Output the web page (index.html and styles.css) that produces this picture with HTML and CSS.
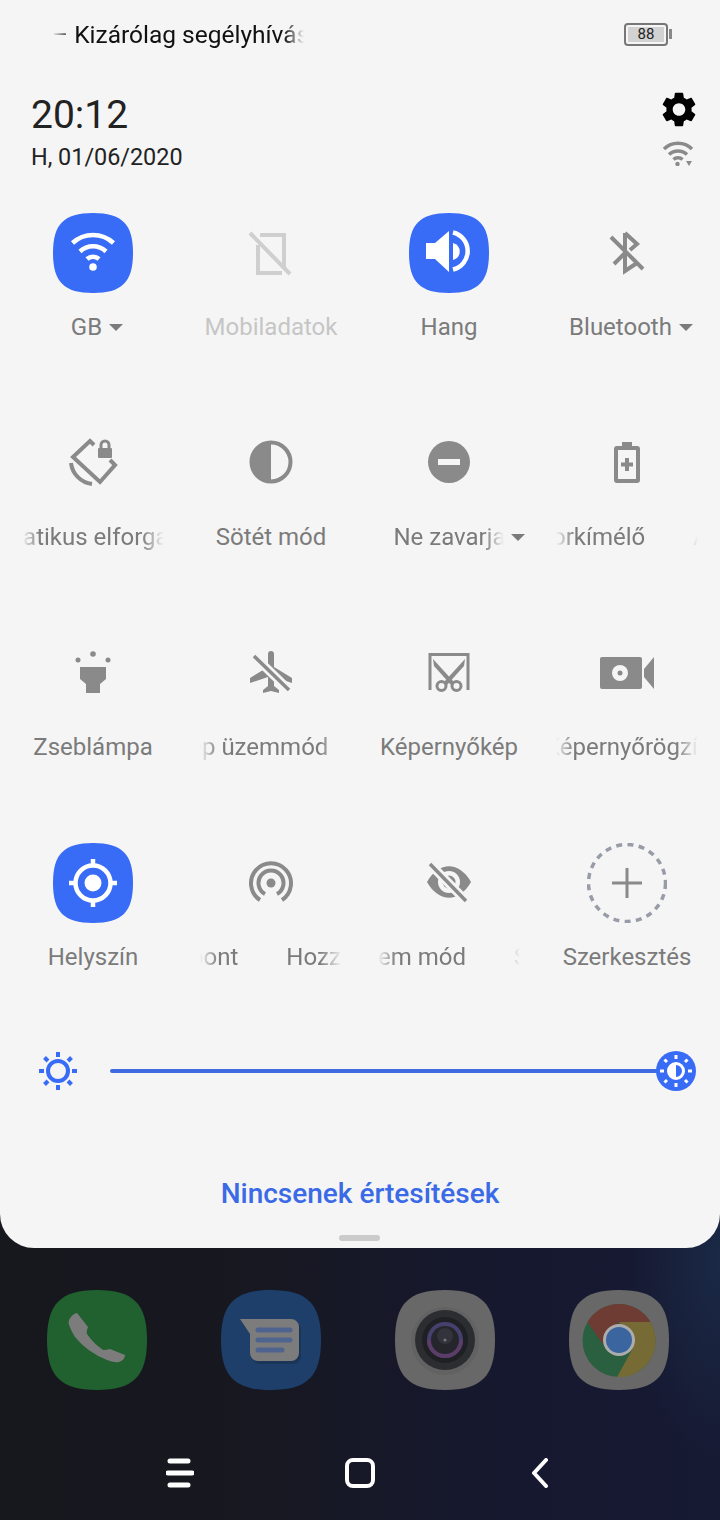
FILE: index.html
```html
<!DOCTYPE html>
<html lang="hu">
<head>
    <meta charset="UTF-8">
    <meta name="viewport" content="width=device-width, initial-scale=1.0">
    <title>Gyorsbeállítások</title>
    <link rel="stylesheet" href="styles.css">
</head>
<body>
    <svg class="defs" width="0" height="0">
        <symbol id="squircle" viewBox="0 0 80 80">
            <path d="M40 0C69 0 80 11 80 40C80 69 69 80 40 80C11 80 0 69 0 40C0 11 11 0 40 0Z"/>
        </symbol>
    </svg>

    <div class="panel">
        <div class="status">
            <div class="carrier"><span>– Kizárólag segélyhívás</span></div>
            <div class="battery">
                <div class="battery-body"><div class="battery-level">88</div></div>
                <div class="battery-nub"></div>
            </div>
        </div>

        <div class="clock-row">
            <div>
                <div class="time">20:12</div>
                <div class="date">H, 01/06/2020</div>
            </div>
            <div class="clock-icons">
                <svg class="gear" viewBox="2.4 2 19.2 20"><path d="M19.14 12.94c.04-.3.06-.61.06-.94 0-.32-.02-.64-.07-.94l2.03-1.58c.18-.14.23-.41.12-.61l-1.92-3.32c-.12-.22-.37-.29-.59-.22l-2.39.96c-.5-.38-1.03-.7-1.62-.94l-.36-2.54c-.04-.24-.24-.41-.48-.41h-3.84c-.24 0-.43.17-.47.41l-.36 2.54c-.59.24-1.13.57-1.62.94l-2.39-.96c-.22-.08-.47 0-.59.22L2.74 8.87c-.12.21-.08.47.12.61l2.03 1.58c-.05.3-.09.63-.09.94s.02.64.07.94l-2.03 1.58c-.18.14-.23.41-.12.61l1.92 3.32c.12.22.37.29.59.22l2.39-.96c.5.38 1.03.7 1.62.94l.36 2.54c.05.24.24.41.48.41h3.84c.24 0 .44-.17.47-.41l.36-2.54c.59-.24 1.13-.56 1.62-.94l2.39.96c.22.08.47 0 .59-.22l1.92-3.32c.12-.22.07-.47-.12-.61l-2.01-1.58zM12 15.6c-1.98 0-3.6-1.62-3.6-3.6s1.62-3.6 3.6-3.6 3.6 1.62 3.6 3.6-1.62 3.6-3.6 3.6z"/></svg>
                <svg class="wifi-small" viewBox="0 0 32 26">
                    <path class="line-soft" d="M2 9A20 20 0 0 1 30 9M7 14.5A13 13 0 0 1 25 14.5M11.5 19.5A6.5 6.5 0 0 1 20.5 19.5"/>
                    <circle class="fill" cx="15.5" cy="24" r="2.2"/>
                    <path class="fill" d="M24 21H30L27 26Z"/>
                </svg>
            </div>
        </div>

        <div class="tiles">
            <div class="tile">
                <svg class="tile-icon" viewBox="0 0 80 80">
                    <use class="tile-on" href="#squircle" width="80" height="80"/>
                    <path class="white-line" d="M19.5 30A30 30 0 0 1 60.5 30M27 38.5A19 19 0 0 1 53 38.5M34 46A9 9 0 0 1 46 46"/>
                    <circle class="white" cx="40" cy="54" r="3.8"/>
                </svg>
                <div class="label label-caret"><span>GB</span><i class="caret"></i></div>
            </div>
            <div class="tile">
                <svg class="tile-icon" viewBox="0 0 80 80">
                    <path class="off-line" d="M29 22H53V54M51 60H27V32M19 20L59 61"/>
                </svg>
                <div class="label label-off"><span>Mobiladatok</span></div>
            </div>
            <div class="tile">
                <svg class="tile-icon" viewBox="0 0 80 80">
                    <use class="tile-on" href="#squircle" width="80" height="80"/>
                    <path class="white" d="M17 30H26L40 18V59L26 46H17Z"/>
                    <path class="white" d="M44 30A10 9 0 0 1 44 47Z"/>
                    <path class="white-line" d="M44 19.5A19 19 0 0 1 44 56.5"/>
                </svg>
                <div class="label"><span>Hang</span></div>
            </div>
            <div class="tile">
                <svg class="tile-icon" viewBox="0 0 80 80">
                    <path class="line" d="M38 20L50 31L43 37M38 20V58L50 50M38 40L27 51"/>
                    <path class="line" d="M24 24L56 56"/>
                </svg>
                <div class="label label-caret"><span>Bluetooth</span><i class="caret"></i></div>
            </div>

            <div class="tile">
                <svg class="tile-icon" viewBox="0 0 80 80">
                    <path class="line" d="M41 22L37 18L20 34L47 59L62 42L57 37M18 40A24 24 0 0 0 39 61"/>
                    <rect class="fill" x="45" y="25" width="14" height="10" rx="1"/>
                    <path class="thin" d="M48 26V22A4 4 0 0 1 56 22V26"/>
                </svg>
                <div class="marquee"><div class="marquee-text shift-rotate"><span>Automatikus elforgatás</span><span>Automatikus elforgatás</span></div></div>
            </div>
            <div class="tile">
                <svg class="tile-icon" viewBox="0 0 80 80">
                    <circle class="line" cx="40" cy="39" r="19.5"/>
                    <path class="fill" d="M40 19A20 20 0 0 0 40 59Z"/>
                </svg>
                <div class="label"><span>Sötét mód</span></div>
            </div>
            <div class="tile">
                <svg class="tile-icon" viewBox="0 0 80 80">
                    <circle class="fill" cx="40" cy="39" r="21"/>
                    <rect class="bg" x="29" y="36" width="22" height="6"/>
                </svg>
                <div class="label label-dnd">
                    <div class="marquee marquee-short"><div class="marquee-text"><span>Ne zavarjanak</span></div></div>
                    <i class="caret"></i>
                </div>
            </div>
            <div class="tile">
                <svg class="tile-icon" viewBox="0 0 80 80">
                    <path class="fill" d="M35 19H45V25H35Z"/>
                    <rect class="line" x="29" y="25" width="22" height="33" rx="1"/>
                    <path class="line" d="M40 35V48M34 41.5H46"/>
                </svg>
                <div class="marquee"><div class="marquee-text shift-battery"><span>Akkumulátorkímélő</span><span>Akkumulátorkímélő</span></div></div>
            </div>

            <div class="tile">
                <svg class="tile-icon" viewBox="0 0 80 80">
                    <path class="fill" d="M27 34H53V46L47 51V60H33V51L27 46Z"/>
                    <circle class="fill" cx="40" cy="21" r="2.8"/>
                    <circle class="fill" cx="25" cy="27" r="2.5"/>
                    <circle class="fill" cx="55" cy="27" r="2.5"/>
                </svg>
                <div class="label"><span>Zseblámpa</span></div>
            </div>
            <div class="tile">
                <svg class="tile-icon" viewBox="0 0 80 80">
                    <path class="fill" d="M37 21A3 3 0 0 1 43 21V34L61 45V50L43 44V53L48 57V60L40 58L32 60V57L37 53V44L19 50V45L37 34Z"/>
                    <path class="gap" d="M23 23L58 57"/>
                    <path class="slash" d="M23 23L58 57"/>
                </svg>
                <div class="marquee"><div class="marquee-text shift-plane"><span>Repülőgép üzemmód</span><span>Repülőgép üzemmód</span></div></div>
            </div>
            <div class="tile">
                <svg class="tile-icon" viewBox="0 0 80 80">
                    <path class="thin" d="M21 57V21.5H59V57"/>
                    <path class="fill" d="M24 26L45 49L42 52L25 33Z"/>
                    <path class="fill" d="M56 26L35 49L38 52L55 33Z"/>
                    <circle class="thin" cx="32.5" cy="53" r="4.5"/>
                    <circle class="thin" cx="47.5" cy="53" r="4.5"/>
                </svg>
                <div class="label"><span>Képernyőkép</span></div>
            </div>
            <div class="tile">
                <svg class="tile-icon" viewBox="0 0 80 80">
                    <rect class="fill" x="13" y="24" width="42" height="32" rx="2"/>
                    <path class="fill" d="M67 24L57 36V44L67 56Z"/>
                    <circle class="bg" cx="33" cy="40" r="8"/>
                    <circle class="fill" cx="33" cy="40" r="2.5"/>
                </svg>
                <div class="marquee"><div class="marquee-text shift-record"><span>Képernyőrögzítő</span><span>Képernyőrögzítő</span></div></div>
            </div>

            <div class="tile">
                <svg class="tile-icon" viewBox="0 0 80 80">
                    <use class="tile-on" href="#squircle" width="80" height="80"/>
                    <circle class="white-line" cx="40" cy="40" r="17.5"/>
                    <circle class="white" cx="40" cy="40" r="8.5"/>
                    <path class="white-line" d="M40 16V23M40 57V64M16 40H23M57 40H64"/>
                </svg>
                <div class="label"><span>Helyszín</span></div>
            </div>
            <div class="tile">
                <svg class="tile-icon" viewBox="0 0 80 80">
                    <path class="line" d="M29 57A20 20 0 1 1 51 57M34 51A12.5 12.5 0 1 1 46 51"/>
                    <circle class="fill" cx="40" cy="40" r="4.5"/>
                </svg>
                <div class="marquee"><div class="marquee-text shift-hotspot"><span>Hozzáférési pont</span><span>Hozzáférési pont</span></div></div>
            </div>
            <div class="tile">
                <svg class="tile-icon" viewBox="0 0 80 80">
                    <path class="fill" d="M18 39C30 18 50 18 62 39C50 60 30 60 18 39Z"/>
                    <circle class="bg" cx="40" cy="39" r="11"/>
                    <circle class="fill" cx="40" cy="39" r="6.5"/>
                    <path class="gap" d="M21 21L57 58"/>
                    <path class="slash" d="M21 21L57 58"/>
                </svg>
                <div class="marquee"><div class="marquee-text shift-eye"><span>Szem mód</span><span>Szem mód</span></div></div>
            </div>
            <div class="tile">
                <svg class="tile-icon" viewBox="0 0 80 80">
                    <circle class="dashed" cx="40" cy="40" r="38.5"/>
                    <path class="thin" d="M25 40H55M40 25V55"/>
                </svg>
                <div class="label"><span>Szerkesztés</span></div>
            </div>
        </div>

        <div class="brightness">
            <svg class="sun" viewBox="0 0 40 40">
                <circle cx="20" cy="20" r="10"/>
                <path d="M20 1V6M20 34V39M1 20H6M34 20H39M6.5 6.5L10 10M30 30L33.5 33.5M6.5 33.5L10 30M30 10L33.5 6.5"/>
            </svg>
            <div class="track"></div>
            <svg class="thumb" viewBox="0 0 40 40">
                <circle class="thumb-bg" cx="20" cy="20" r="20"/>
                <circle class="thumb-ring" cx="20" cy="20" r="7.5"/>
                <path class="white" d="M20 12.5A7.5 7.5 0 0 0 20 27.5Z"/>
                <path class="thumb-ring" d="M20 4V8M20 32V36M4 20H8M32 20H36M8.5 8.5L11 11M29 29L31.5 31.5M8.5 31.5L11 29M29 11L31.5 8.5"/>
            </svg>
        </div>

        <div class="empty">Nincsenek értesítések</div>
        <div class="handle"></div>
    </div>

    <div class="dock">
        <svg class="app" viewBox="0 0 100 100">
            <use class="app-phone" href="#squircle" width="100" height="100"/>
            <path class="app-glyph" d="M30 23L41 37Q39 42 40 44Q46 53 56 60Q60 60 63 59L78 65Q78 70 72 72Q68 73 60 70Q40 62 28 47Q20 34 22 30Q25 24 30 23Z"/>
        </svg>
        <svg class="app" viewBox="0 0 100 100">
            <use class="app-msg" href="#squircle" width="100" height="100"/>
            <path class="app-shadow" d="M21 32H72A8 8 0 0 1 80 40V66A8 8 0 0 1 72 74H39A8 8 0 0 1 31 66V47Z"/>
            <path class="app-glyph" d="M19 29H70A8 8 0 0 1 78 37V63A8 8 0 0 1 70 71H37A8 8 0 0 1 29 63V44Z"/>
            <path class="msg-lines" d="M37 40H69M37 50H69M37 60H61"/>
        </svg>
        <svg class="app" viewBox="0 0 100 100">
            <use class="app-grey" href="#squircle" width="100" height="100"/>
            <circle cx="50" cy="51" r="34" fill="#626262"/>
            <circle cx="50" cy="50" r="30" fill="#2c2d30"/>
            <circle cx="50" cy="50" r="23" fill="#1f2024"/>
            <circle cx="50" cy="50" r="18" fill="#47406f"/>
            <path d="M32 50A18 18 0 0 0 68 50Z" fill="#5a3d68"/>
            <circle cx="50" cy="50" r="14" fill="#25252c"/>
            <circle cx="50" cy="46" r="8" fill="#33333c"/>
            <circle cx="50" cy="50" r="1.5" fill="#777"/>
        </svg>
        <svg class="app" viewBox="0 0 100 100">
            <use class="app-grey" href="#squircle" width="100" height="100"/>
            <circle cx="50" cy="50.5" r="36.5" fill="#2a5f3f"/>
            <path d="M81.5 32A36.5 36.5 0 0 1 48 87L64 58L50 32Z" fill="#766a35"/>
            <path d="M18.5 32A36.5 36.5 0 0 1 81.5 32H50L36 57Z" fill="#6e3c33"/>
            <circle cx="50" cy="50" r="16" fill="#acacac"/>
            <circle cx="50" cy="50" r="13" fill="#3a659f"/>
        </svg>
    </div>

    <div class="nav">
        <svg class="nav-menu" viewBox="0 0 28 30"><path d="M4 3H22M2 15H26M4 27H22"/></svg>
        <svg class="nav-home" viewBox="0 0 30 30"><rect x="2" y="2" width="26" height="26" rx="6"/></svg>
        <svg class="nav-back" viewBox="0 0 18 30"><path d="M15 2L3 15L15 28"/></svg>
    </div>
</body>
</html>
```

FILE: styles.css
```css
* {
    box-sizing: border-box;
}

html, body {
    margin: 0;
    padding: 0;
}

body {
    width: 720px;
    height: 1520px;
    overflow: hidden;
    font-family: Roboto, "Liberation Sans", sans-serif;
    background-color: #17181f;
    background-image:
        radial-gradient(ellipse 90px 200px at 720px 1260px, #1a2946 0%, rgba(26, 41, 70, 0) 100%),
        linear-gradient(to right, #17181e 0%, #17181f 30%, #16182f 70%, #171a33 100%);
}

.defs {
    position: absolute;
}

.panel {
    height: 1248px;
    background-color: #f5f5f5;
    border-radius: 0 0 34px 34px;
    position: relative;
}

/* status bar */
.status {
    height: 68px;
    display: flex;
    justify-content: space-between;
    align-items: center;
    padding: 0 48px 0 52px;
}

.carrier {
    width: 252px;
    overflow: hidden;
    white-space: nowrap;
    font-size: 24.5px;
    color: #111;
    -webkit-mask-image: linear-gradient(to right, transparent 0, #000 20px, #000 calc(100% - 20px), transparent 100%);
    mask-image: linear-gradient(to right, transparent 0, #000 20px, #000 calc(100% - 20px), transparent 100%);
}

.battery {
    display: flex;
    align-items: center;
    gap: 1px;
}

.battery-body {
    width: 44px;
    height: 23px;
    border: 2px solid #777;
    border-radius: 4px;
    padding: 2px;
}

.battery-level {
    height: 100%;
    background-color: #d2d2d2;
    font-size: 15px;
    line-height: 15px;
    text-align: center;
    color: #222;
}

.battery-nub {
    width: 3px;
    height: 10px;
    background-color: #888;
}

/* clock */
.clock-row {
    height: 145px;
    display: flex;
    justify-content: space-between;
    padding: 24px 24px 0 31px;
}

.time {
    font-size: 39px;
    line-height: 46px;
    color: #222;
}

.date {
    font-size: 23.4px;
    line-height: 28px;
    margin-top: 5px;
    color: #222;
}

.clock-icons {
    display: flex;
    flex-direction: column;
    align-items: flex-end;
    gap: 13px;
}

.gear {
    width: 34px;
    height: 35px;
    fill: #000;
}

.wifi-small {
    width: 32px;
    height: 26px;
    margin-right: 2px;
}

/* tiles */
.tiles {
    display: grid;
    grid-template-columns: repeat(4, 178px);
    grid-template-rows: 210px 210px 210px 170px;
    margin: 0 4px;
}

.tile {
    display: flex;
    flex-direction: column;
    align-items: center;
}

.tile-icon {
    width: 80px;
    height: 80px;
    margin-bottom: 20px;
    flex: none;
}

.tile-on {
    fill: #386bf6;
}

.fill {
    fill: #8a8a8a;
}

.bg {
    fill: #f5f5f5;
}

.white {
    fill: #fff;
}

.line, .line-soft, .thin, .slash, .gap, .off-line, .white-line, .dashed {
    fill: none;
}

.line {
    stroke: #8a8a8a;
    stroke-width: 4;
}

.line-soft {
    stroke: #8a8a8a;
    stroke-width: 3.5;
}

.thin {
    stroke: #8a8a8a;
    stroke-width: 3;
}

.slash {
    stroke: #8a8a8a;
    stroke-width: 3.5;
}

.gap {
    stroke: #f5f5f5;
    stroke-width: 9;
}

.off-line {
    stroke: #cfcfcf;
    stroke-width: 4;
}

.white-line {
    stroke: #fff;
    stroke-width: 4.5;
}

.dashed {
    stroke: #979ca7;
    stroke-width: 3.5;
    stroke-dasharray: 6 5.35;
}

.label {
    display: flex;
    align-items: center;
    gap: 7px;
    height: 28px;
    font-size: 24px;
    line-height: 28px;
    color: #7b7b7b;
    white-space: nowrap;
}

.label-off {
    color: #c6c6c6;
}

.label-caret {
    padding-left: 8px;
}

.label-dnd {
    padding-left: 20px;
}

.caret {
    width: 0;
    height: 0;
    border-left: 7px solid transparent;
    border-right: 7px solid transparent;
    border-top: 7px solid #7b7b7b;
}

.marquee {
    width: 142px;
    height: 28px;
    overflow: hidden;
    font-size: 24px;
    line-height: 28px;
    color: #7b7b7b;
    white-space: nowrap;
    -webkit-mask-image: linear-gradient(to right, transparent 0, #000 18px, #000 calc(100% - 22px), transparent 100%);
    mask-image: linear-gradient(to right, transparent 0, #000 18px, #000 calc(100% - 22px), transparent 100%);
}

.marquee-short {
    width: 110px;
    -webkit-mask-image: linear-gradient(to right, #000 0, #000 calc(100% - 20px), transparent 100%);
    mask-image: linear-gradient(to right, #000 0, #000 calc(100% - 20px), transparent 100%);
}

.marquee-text {
    display: inline-flex;
    gap: 48px;
}

.shift-rotate { margin-left: -70px; }
.shift-battery { margin-left: -118px; }
.shift-plane { margin-left: -98px; }
.shift-record { margin-left: -11px; }
.shift-hotspot { margin-left: -143px; }
.shift-eye { margin-left: -26px; }

/* brightness */
.brightness {
    height: 40px;
    margin-top: 38px;
    padding: 0 24px 0 38px;
    display: flex;
    align-items: center;
}

.sun {
    width: 40px;
    height: 40px;
    flex: none;
    margin-right: 32px;
    fill: none;
    stroke: #386bf6;
    stroke-width: 4;
}

.track {
    flex: 1;
    height: 4px;
    margin-right: -4px;
    border-radius: 2px;
    background-color: #3f6ae0;
}

.thumb {
    width: 40px;
    height: 40px;
    flex: none;
}

.thumb-bg {
    fill: #386bf6;
}

.thumb-ring {
    fill: none;
    stroke: #fff;
    stroke-width: 3;
}

.empty {
    margin-top: 87px;
    font-size: 28px;
    font-weight: 500;
    line-height: 32px;
    text-align: center;
    color: #3a6ae6;
}

.handle {
    position: absolute;
    left: 339px;
    bottom: 7px;
    width: 41px;
    height: 6px;
    border-radius: 3px;
    background-color: #cbcbcb;
}

/* home screen below the panel */
.dock {
    display: flex;
    gap: 74px;
    padding: 42px 0 0 47px;
}

.app {
    width: 100px;
    height: 100px;
    flex: none;
}

.app-phone { fill: #21602f; }
.app-msg { fill: #1f3f6b; }
.app-grey { fill: #686868; }
.app-glyph { fill: #7c7c7c; }
.app-shadow { fill: #1b3559; }

.msg-lines {
    fill: none;
    stroke: #4e648f;
    stroke-width: 5;
    stroke-linecap: round;
}

.nav {
    display: flex;
    margin-top: 68px;
    align-items: center;
    padding-left: 166px;
}

.nav svg {
    fill: none;
    stroke: #fff;
    stroke-linecap: round;
    stroke-linejoin: round;
}

.nav-menu {
    width: 28px;
    height: 30px;
    stroke-width: 5;
}

.nav-home {
    width: 30px;
    height: 30px;
    margin-left: 151px;
    stroke-width: 4;
}

.nav-back {
    width: 18px;
    height: 30px;
    margin-left: 156px;
    stroke-width: 4;
}
```
